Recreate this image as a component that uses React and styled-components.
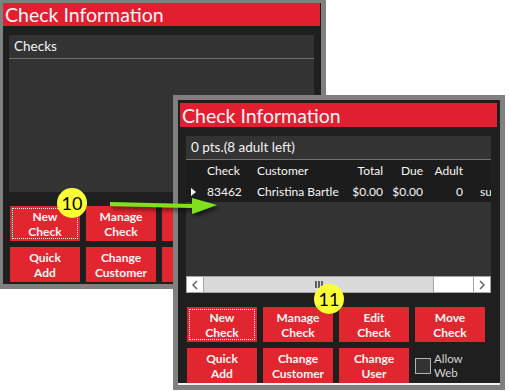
import React from 'react';
import styled, { createGlobalStyle } from 'styled-components';

const GlobalStyle = createGlobalStyle`
    html, body {
        margin: 0;
        padding: 0;
        background: #ffffff;
        overflow: hidden;
    }
    body {
        font-family: Lato, "Open Sans", "DejaVu Sans", sans-serif;
    }
`;

const Stage = styled.div`
    position: relative;
    width: 509px;
    height: 391px;
    overflow: hidden;
    background: #ffffff;
`;

const Window = styled.div`
    position: absolute;
    left: ${p => p.$x}px;
    top: ${p => p.$y}px;
    width: 317px;
    display: flex;
    flex-direction: column;
    background: #1f1f1f;
    border-style: solid;
    border-color: #808080;
    border-width: ${p => p.$border};
    padding: ${p => p.$pad};
    box-shadow: ${p => (p.$edge ? 'inset 0 -2px 0 #f2f2f2' : 'none')};
`;

const TitleBar = styled.div`
    height: ${p => p.$h}px;
    line-height: ${p => p.$h - 1}px;
    padding: 1px 0 0 2px;
    box-sizing: border-box;
    background: #e21f30;
    color: #fff4f6;
    font-size: 19.5px;
    white-space: nowrap;
`;

const Panel = styled.div`
    margin: 9px 0 0 6px;
    width: 305px;
    height: 157px;
    display: flex;
    flex-direction: column;
    background: #333333;
    overflow: hidden;
`;

const PanelHead = styled.div`
    height: 23px;
    line-height: 23px;
    padding-left: 5px;
    border-bottom: 1px solid #707070;
    color: #f4f4f4;
    font-size: 13.5px;
    white-space: nowrap;
`;

const GridRow = styled.div`
    display: grid;
    grid-template-columns: 17px 50px 87px 46px 40px 40px 25px;
    height: 21px;
    align-items: center;
    background: #1c1c1c;
    color: #f6f6f6;
    font-size: 12px;
    white-space: nowrap;
`;

const Cell = styled.div`
    text-align: ${p => p.$align || 'left'};
    padding: ${p => p.$pad || '0 0 0 4px'};
    overflow: hidden;
`;

const RowMark = styled.div`
    width: 0;
    height: 0;
    margin-left: 5px;
    border-left: 5px solid #ffffff;
    border-top: 4px solid transparent;
    border-bottom: 4px solid transparent;
`;

const Fill = styled.div`
    flex: 1;
`;

const ScrollBar = styled.div`
    display: flex;
    height: 17px;
    box-sizing: border-box;
    border: 1px solid #a6a6a6;
    background: #ffffff;
`;

const ScrollBtn = styled.div`
    width: 16px;
    display: flex;
    align-items: center;
    justify-content: center;
    border-${p => p.$side}: 1px solid #a6a6a6;
`;

const Thumb = styled.div`
    width: 229px;
    display: flex;
    align-items: center;
    justify-content: center;
    gap: 1px;
    background: #dadada;
    border-right: 1px solid #a6a6a6;
`;

const Grip = styled.span`
    width: 2px;
    height: 7px;
    background: #606060;
`;

const Track = styled.div`
    flex: 1;
`;

const ButtonGrid = styled.div`
    display: grid;
    grid-template-columns: repeat(4, 70px);
    grid-auto-rows: 35px;
    gap: 6px;
    margin: 14px 0 0 7px;
`;

const Button = styled.div`
    position: relative;
    display: flex;
    align-items: center;
    justify-content: center;
    text-align: center;
    background: #e1262f;
    color: #fff6f6;
    font-size: 12px;
    font-weight: 700;
    line-height: 15px;

    &::after {
        content: '';
        display: ${p => (p.$focus ? 'block' : 'none')};
        position: absolute;
        inset: 2px;
        border: 1px dotted #ffffff;
    }
`;

const CheckWrap = styled.div`
    display: flex;
    align-items: center;
    gap: 3px;
    color: #d4d4d4;
    font-size: 11.5px;
    line-height: 14px;
`;

const Box = styled.span`
    width: 14px;
    height: 14px;
    background: #333333;
    border: 1px solid #b4b4b4;
`;

const Badge = styled.div`
    position: absolute;
    left: ${p => p.$x}px;
    top: ${p => p.$y}px;
    width: 30px;
    height: 30px;
    border-radius: 50%;
    background: #ffff38;
    color: #000000;
    font-size: 18px;
    display: flex;
    align-items: center;
    justify-content: center;
    z-index: 3;
`;

const ArrowSvg = styled.svg`
    position: absolute;
    left: 100px;
    top: 188px;
    z-index: 2;
    overflow: visible;
`;

const columns = [
    { label: 'Check', align: 'left' },
    { label: 'Customer', align: 'left' },
    { label: 'Total', align: 'right', pad: '0 3px 0 0' },
    { label: 'Due', align: 'right', pad: '0 3px 0 0' },
    { label: 'Adult', align: 'right', pad: '0 3px 0 0' },
    { label: '', align: 'left', pad: '0 0 0 14px' },
];

const row = ['83462', 'Christina Bartle', '$0.00', '$0.00', '0', 'su'];

function Chevron({ dir }) {
    const pts = dir === 'left' ? '5,1 1,5 5,9' : '1,1 5,5 1,9';
    return (
        <svg width="6" height="10" viewBox="0 0 6 10">
            <polyline points={pts} fill="none" stroke="#606060" strokeWidth="1.5" />
        </svg>
    );
}

function Buttons() {
    return (
        <ButtonGrid>
            <Button $focus>New<br />Check</Button>
            <Button>Manage<br />Check</Button>
            <Button>Edit<br />Check</Button>
            <Button>Move<br />Check</Button>
            <Button>Quick<br />Add</Button>
            <Button>Change<br />Customer</Button>
            <Button>Change<br />User</Button>
            <CheckWrap>
                <Box />
                <span>Allow<br />Web</span>
            </CheckWrap>
        </ButtonGrid>
    );
}

function App() {
    return (
        <Stage>
            <GlobalStyle />

            <Window $x={0} $y={0} $border="3px 5px 5px 3px" $pad="0 1px 2px 0">
                <TitleBar $h={23}>Check Information</TitleBar>
                <Panel>
                    <PanelHead>Checks</PanelHead>
                </Panel>
                <Buttons />
            </Window>

            <Window $x={173} $y={95} $border="5px" $pad="3px 3px 2px 2px" $edge>
                <TitleBar $h={24}>Check Information</TitleBar>
                <Panel>
                    <PanelHead>0 pts.(8 adult left)</PanelHead>
                    <GridRow>
                        <Cell />
                        {columns.map((c, i) => (
                            <Cell key={i} $align={c.align} $pad={c.pad}>{c.label}</Cell>
                        ))}
                    </GridRow>
                    <GridRow>
                        <RowMark />
                        {row.map((v, i) => (
                            <Cell key={i} $align={columns[i].align} $pad={columns[i].pad}>{v}</Cell>
                        ))}
                    </GridRow>
                    <Fill />
                    <ScrollBar>
                        <ScrollBtn $side="right"><Chevron dir="left" /></ScrollBtn>
                        <Thumb>
                            <Grip /><Grip /><Grip />
                        </Thumb>
                        <Track />
                        <ScrollBtn $side="left"><Chevron dir="right" /></ScrollBtn>
                    </ScrollBar>
                </Panel>
                <Buttons />
            </Window>

            <ArrowSvg width="130" height="36" viewBox="0 0 130 36">
                <defs>
                    <filter id="arrowShadow" x="-20%" y="-50%" width="140%" height="200%">
                        <feDropShadow dx="2" dy="3" stdDeviation="2" floodColor="#000" floodOpacity="0.55" />
                    </filter>
                </defs>
                <g filter="url(#arrowShadow)" fill="#80e21c">
                    <polygon points="10,14 93,16 93,20 10,18" />
                    <polygon points="92,10 117,17 92,26" />
                </g>
            </ArrowSvg>

            <Badge $x={57} $y={188}>10</Badge>
            <Badge $x={314} $y={284}>11</Badge>
        </Stage>
    );
}

export default App;
